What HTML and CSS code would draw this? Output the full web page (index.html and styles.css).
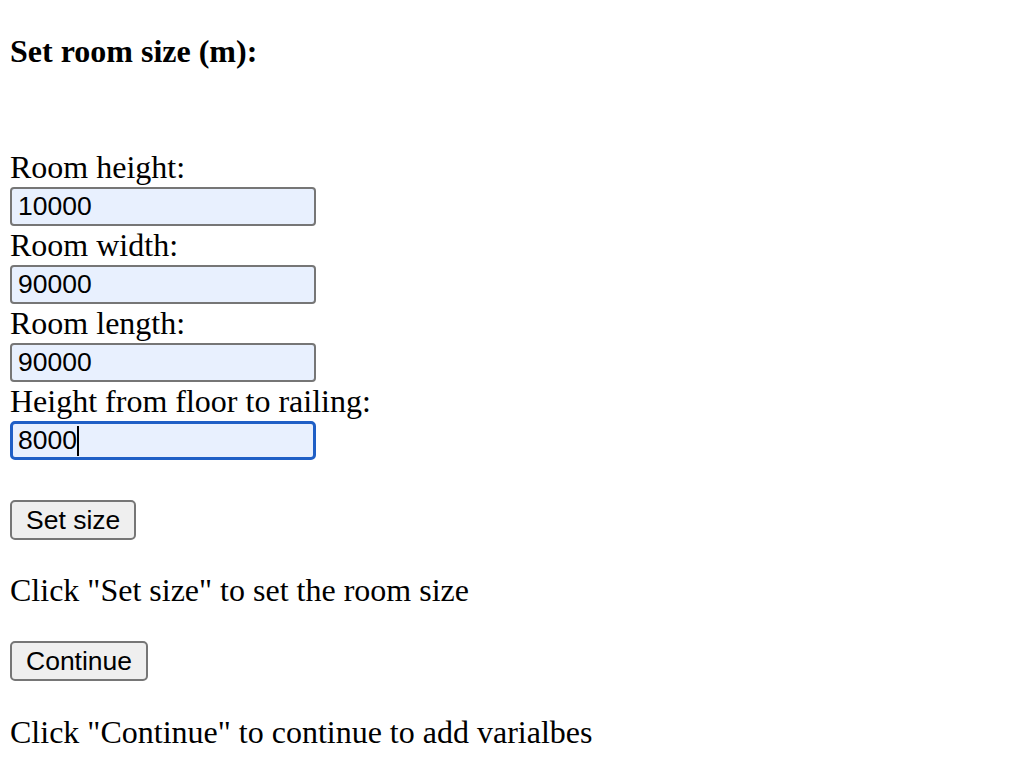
FILE: index.html
```html
<!DOCTYPE html>
<html>
<head>
<meta charset="utf-8">
<link rel="stylesheet" href="styles.css">
</head>
<body>
<div class="page">
  <h4 class="title">Set room size (m):</h4>
  <div class="form">
    <label class="label">Room height:</label>
    <input class="field" type="text" value="10000">
    <label class="label">Room width:</label>
    <input class="field" type="text" value="90000">
    <label class="label">Room length:</label>
    <input class="field" type="text" value="90000">
    <label class="label">Height from floor to railing:</label>
    <div class="field focused"><span>8000</span><span class="caret"></span></div>
  </div>
  <button class="btn btn-first">Set size</button>
  <p class="msg">Click "Set size" to set the room size</p>
  <button class="btn">Continue</button>
  <p class="msg msg-last">Click "Continue" to continue to add varialbes</p>
</div>
</body>
</html>
```

FILE: styles.css
```css
html, body {
  margin: 0;
  padding: 0;
  background: #ffffff;
}
.page {
  display: flex;
  flex-direction: column;
  align-items: flex-start;
  padding-left: 10px;
  font-family: "Liberation Serif", "Times New Roman", serif;
  font-size: 32px;
  color: #000;
}
.title {
  margin: 0;
  padding-top: 33px;
  height: 39px;
  font-size: 32px;
  line-height: 37px;
  font-weight: bold;
}
.form {
  display: flex;
  flex-direction: column;
  align-items: flex-start;
  margin-top: 76px;
}
.label {
  height: 39px;
  line-height: 39px;
  white-space: nowrap;
}
.field {
  box-sizing: border-box;
  width: 306px;
  height: 39px;
  margin: 0;
  padding: 0 6px;
  border: 2px solid #767676;
  border-radius: 4px;
  background: #e8f0fe;
  font-family: "Liberation Sans", Arial, sans-serif;
  font-size: 26.5px;
  color: #000;
  display: flex;
  align-items: center;
}
.focused {
  border: 3px solid #1f5fc6;
  border-radius: 5px;
  padding-left: 5px;
}
.caret {
  display: inline-block;
  width: 2px;
  height: 30px;
  background: #000;
}
.btn {
  box-sizing: border-box;
  margin: 40px 0 0 0;
  padding: 0 14px;
  height: 40px;
  border: 2px solid #767676;
  border-radius: 5px;
  background: #efefef;
  font-family: "Liberation Sans", Arial, sans-serif;
  font-size: 26.5px;
  color: #000;
}
.msg {
  margin: 31px 0 0 0;
  height: 39px;
  line-height: 39px;
  white-space: nowrap;
}
.msg-last {
  margin-top: 32px;
}
.msg + .btn {
  margin-top: 31px;
}
```
